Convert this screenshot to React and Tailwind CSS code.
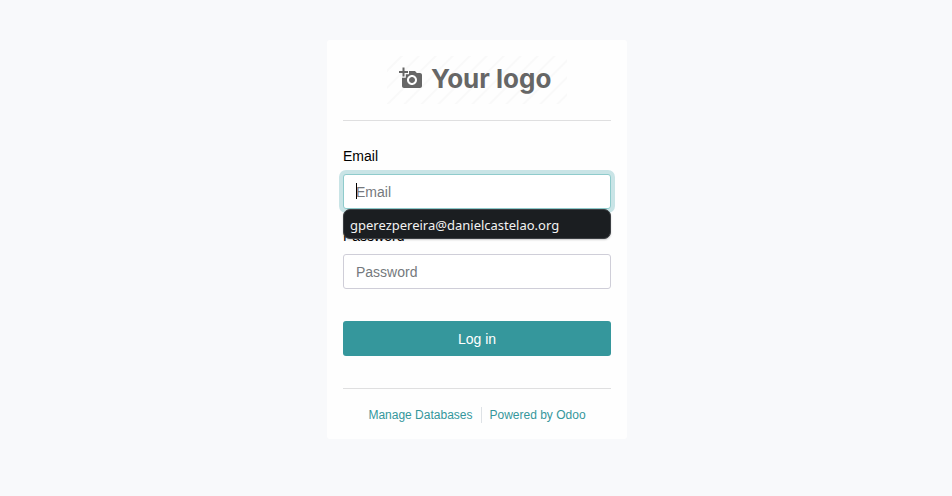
function CameraIcon() {
  return (
    <svg viewBox="0 0 24 24" className="size-6" fill="#666" aria-hidden="true">
      <path d="M3.500 4V0.500h2V4H9v2H5.500v3.500h-2V6H0V4h3.500zm-.5 6.800h3.800V7.200H10V4h6l1.830 2H21c1.100 0 2 .9 2 2v11c0 1.100-.9 2-2 2H5c-1.100 0-2-.9-2-2v-8.200zM13 18c2.760 0 5-2.240 5-5s-2.240-5-5-5-5 2.240-5 5 2.240 5 5 5zm-3-5c0 1.660 1.340 3 3 3s3-1.340 3-3-1.340-3-3-3-3 1.340-3 3z" />
    </svg>
  );
}

function Logo() {
  return (
    <div className="mx-auto flex h-12 w-45 items-center gap-2 bg-[repeating-linear-gradient(135deg,#fefefe_0px,#fefefe_9px,#f9f9f9_10px,#f9f9f9_11px,#fefefe_12px)] pb-0.5 pl-3">
      <CameraIcon />
      <span className="font-[Inter,sans-serif] text-[26px] leading-8 font-bold whitespace-nowrap text-[#666]">
        Your logo
      </span>
    </div>
  );
}

const labelClass = "mb-1.5 block leading-[23px]";
const inputClass =
  "block h-[35px] w-full rounded-[3px] border bg-white px-3 text-sm text-[#495057] outline-none placeholder:text-[#75797d]";

export default function App() {
  return (
    <div className="min-h-screen bg-[#f8f9fb] py-10 pl-0.5 font-['Liberation_Sans',Arial,sans-serif] text-sm leading-[21px] text-black">
      <main className="mx-auto w-full max-w-[300px] rounded-[3px] bg-[#fefefe] p-4">
        <header className="border-b border-[#dfdfe0] pb-4">
          <Logo />
        </header>

        <form className="mt-6" onSubmit={(e) => e.preventDefault()}>
          <label htmlFor="login" className={labelClass}>
            Email
          </label>
          <div className="relative mb-4">
            <input
              id="login"
              type="text"
              placeholder="Email"
              autoComplete="off"
              className={`${inputClass} border-[#8fcbcc] shadow-[0_0_0_4px_#c9e4e6]`}
            />
            <span className="absolute top-[9px] left-[13px] h-4 w-px bg-black" />
            <ul
              role="listbox"
              aria-label="Suggestions"
              className="absolute top-full left-0 z-10 w-full rounded-[7px] border border-[#3c3f43] bg-[#1b1e21] px-1.5 pt-0.5 font-['Noto_Sans',sans-serif] text-[13px] leading-[26px] text-[#f2f2f2] shadow-[0_1px_2px_#00000033]"
            >
              <li role="option" aria-selected="false">
                gperezpereira@danielcastelao.org
              </li>
            </ul>
          </div>

          <label htmlFor="password" className={labelClass}>
            Password
          </label>
          <input
            id="password"
            type="password"
            placeholder="Password"
            autoComplete="off"
            className={`${inputClass} border-[#cfced8]`}
          />

          <button
            type="submit"
            className="my-8 block h-[35px] w-full rounded-[3px] bg-[#35979c] pt-0.5 text-white"
          >
            Log in
          </button>
        </form>

        <footer className="flex justify-center border-t border-[#dfdfe0] pt-[18px] text-xs leading-4 text-[#35979c]">
          <a href="#databases" className="border-r border-[#dee2e6] pr-2">
            Manage Databases
          </a>
          <a href="#odoo" className="pl-2">
            Powered by Odoo
          </a>
        </footer>
      </main>
    </div>
  );
}
